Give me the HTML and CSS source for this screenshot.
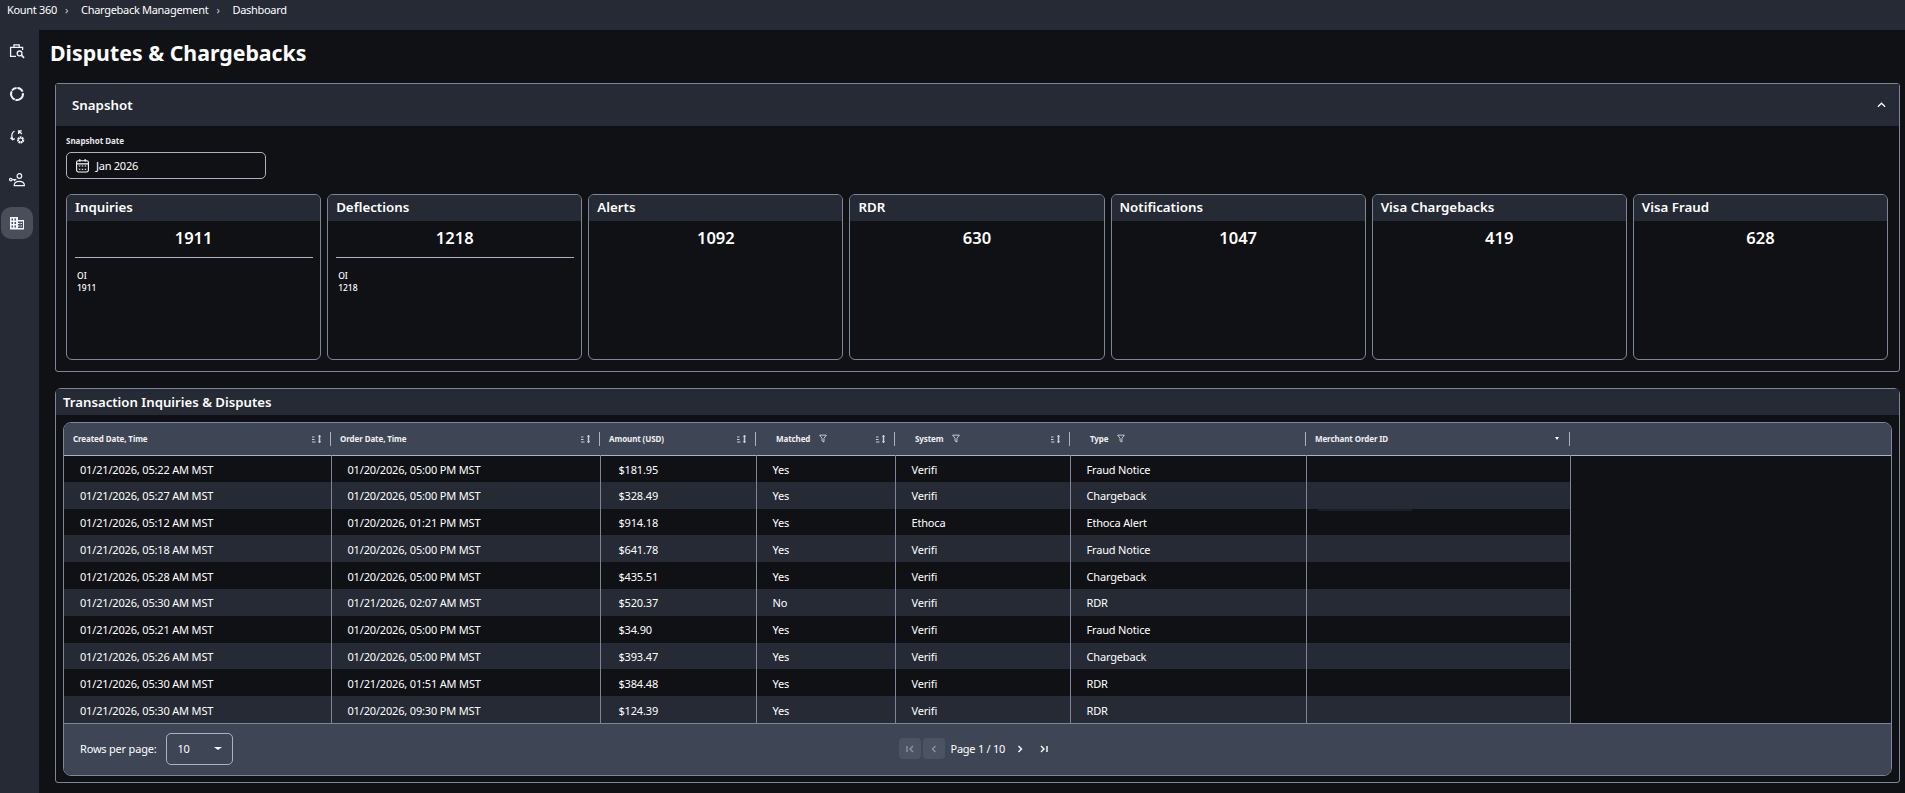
FILE: index.html
```html
<!DOCTYPE html>
<html lang="en">
  <head>
    <meta charset="UTF-8" />
    <meta name="viewport" content="width=device-width, initial-scale=1.0" />
    <title>Disputes &amp; Chargebacks</title>
    <link rel="stylesheet" href="styles.css">
  </head>
  <body>
    <svg class="defs" width="0" height="0">
      <symbol id="sort" viewBox="0 0 10 10">
        <path d="M0 3h2.500M0 5.500h2.500M0 8h3.500" stroke="currentColor" stroke-width="1" fill="none" />
        <path d="M7.500 1v8" stroke="currentColor" stroke-width="1.500" fill="none" />
        <path d="M6 3l1.500-2 1.500 2zM6 7l1.500 2 1.500-2z" fill="currentColor" />
      </symbol>
      <symbol id="funnel" viewBox="0 0 10 10">
        <path d="M.8 .8h8.400L6.200 4.800V9.400L3.800 8V4.800z" stroke="currentColor" stroke-width="1" fill="none" />
      </symbol>
    </svg>

    <nav class="topbar">
      <span>Kount 360</span><span class="crumb-sep">›</span>
      <span>Chargeback Management</span><span class="crumb-sep">›</span>
      <span>Dashboard</span>
    </nav>

    <div class="layout">
      <aside class="sidebar">
        <a class="side-item">
          <svg viewBox="0 0 16 16" width="16" height="16" fill="none" stroke="currentColor" stroke-width="1.300">
            <path d="M7 13.400H1.600V4.400h12V7M5 4.400V1.800h5.200v2.600" />
            <circle cx="10.600" cy="10.400" r="2.400" />
            <path d="M12.400 12.200l2.600 2.600" stroke-width="1.700" />
          </svg>
        </a>
        <a class="side-item">
          <svg viewBox="0 0 16 16" width="16" height="16" fill="none" stroke="currentColor" stroke-width="2">
            <path d="M7.600 2A6 6 0 0 0 3 4.500M2.700 5.200A6 6 0 0 0 5.700 13.500M6.400 13.800A6 6 0 0 0 13.900 7.200M13.600 5.700A6 6 0 0 0 8.400 2" />
          </svg>
        </a>
        <a class="side-item">
          <svg viewBox="0 0 16 16" width="16" height="16" fill="none" stroke="currentColor" stroke-width="1.300">
            <path d="M5.400 2C3 3.600 2.200 6.800 3.600 10M1.400 8.800l2.200 2 2.200-1.200" />
            <path d="M9.600 5V1.800h3.200M9.800 2l3 3" />
            <circle cx="11.600" cy="11" r="2.700" stroke-width="1.900" stroke-dasharray="1.700 .6" />
            <circle cx="11.600" cy="11" r="2" stroke-width="1" />
          </svg>
        </a>
        <a class="side-item">
          <svg viewBox="0 0 16 16" width="16" height="16" fill="none" stroke="currentColor" stroke-width="1.200">
            <circle cx="10.400" cy="4" r="2.300" />
            <path d="M5.200 13.600c0-3 2.200-4.200 5.200-4.200s5 1.200 5 4.200z" />
            <circle cx="1.800" cy="7.600" r="1.300" />
            <path d="M3.200 7.600h4.200M5.600 7.600v1.600" />
          </svg>
        </a>
        <a class="side-item active">
          <svg viewBox="0 0 16 16" width="16" height="16" fill="currentColor">
            <path fill-rule="evenodd" d="M1 2h8v3h6v9.500H1zM2.500 3.500v2H4v-2zm3 0v2H7v-2zm-3 3.500v2H4V7zm3 0v2H7V7zm-3 3.500v2H4v-2zm3 0v2H7v-2zM9 6.500V8h1.500v1H9v1.500h1.500v1H9V13h5V6.500zM11.500 8H13v1h-1.500zm0 2.500H13v1h-1.500z" />
          </svg>
        </a>
      </aside>

      <main class="content">
        <h1>Disputes &amp; Chargebacks</h1>

        <section class="panel snapshot">
          <header class="snapshot-head">
            <h2>Snapshot</h2>
            <svg viewBox="0 0 10 6" width="9" height="6" fill="none" stroke="currentColor" stroke-width="1.400">
              <path d="M1 5l4-4 4 4" />
            </svg>
          </header>
          <div class="snapshot-body">
            <label class="date-label">Snapshot Date</label>
            <div class="date-input">
              <svg viewBox="0 0 14 14" width="15" height="15" fill="none" stroke="currentColor" stroke-width="1">
                <rect x="1.500" y="2.500" width="11" height="10.500" rx="1.500" />
                <path d="M1.500 5.500h11M4.500 1v2.500M9.500 1v2.500" />
                <path d="M3.500 7.500h7M3.500 10.500h7" stroke-dasharray="1.500 1.250" />
              </svg>
              <span>Jan 2026</span>
            </div>
            <div class="cards">
              <article class="card">
                <h3>Inquiries</h3>
                <div class="card-value">1911</div>
                <hr />
                <div class="card-detail">
                  <div>OI</div>
                  <div>1911</div>
                </div>
              </article>
              <article class="card">
                <h3>Deflections</h3>
                <div class="card-value">1218</div>
                <hr />
                <div class="card-detail">
                  <div>OI</div>
                  <div>1218</div>
                </div>
              </article>
              <article class="card">
                <h3>Alerts</h3>
                <div class="card-value">1092</div>
              </article>
              <article class="card">
                <h3>RDR</h3>
                <div class="card-value">630</div>
              </article>
              <article class="card">
                <h3>Notifications</h3>
                <div class="card-value">1047</div>
              </article>
              <article class="card">
                <h3>Visa Chargebacks</h3>
                <div class="card-value">419</div>
              </article>
              <article class="card">
                <h3>Visa Fraud</h3>
                <div class="card-value">628</div>
              </article>
            </div>
          </div>
        </section>

        <section class="panel disputes">
          <header class="disputes-head">Transaction Inquiries &amp; Disputes</header>
          <div class="table-wrap">
            <table>
              <colgroup>
                <col class="col-created" />
                <col class="col-order" />
                <col class="col-amount" />
                <col class="col-matched" />
                <col class="col-system" />
                <col class="col-type" />
                <col class="col-merchant" />
                <col />
              </colgroup>
              <thead>
                <tr>
                  <th><div class="th-in"><span class="th-label">Created Date, Time</span><svg class="sort"><use href="#sort" /></svg></div></th>
                  <th><div class="th-in"><span class="th-label">Order Date, Time</span><svg class="sort"><use href="#sort" /></svg></div></th>
                  <th><div class="th-in"><span class="th-label">Amount (USD)</span><svg class="sort"><use href="#sort" /></svg></div></th>
                  <th><div class="th-in indent-m"><span class="th-label">Matched</span><svg class="funnel"><use href="#funnel" /></svg><svg class="sort"><use href="#sort" /></svg></div></th>
                  <th><div class="th-in indent-m"><span class="th-label">System</span><svg class="funnel"><use href="#funnel" /></svg><svg class="sort"><use href="#sort" /></svg></div></th>
                  <th><div class="th-in indent-m"><span class="th-label">Type</span><svg class="funnel"><use href="#funnel" /></svg></div></th>
                  <th><div class="th-in"><span class="th-label">Merchant Order ID</span><span class="mini-caret"></span></div></th>
                  <th></th>
                </tr>
              </thead>
              <tbody id="rows"></tbody>
            </table>
            <footer class="pager">
              <span class="rows-label">Rows per page:</span>
              <div class="rows-select"><span>10</span><span class="caret"></span></div>
              <div class="pages">
                <button class="page-btn" disabled>
                  <svg viewBox="0 0 10 10" width="10" height="10" fill="none" stroke="currentColor" stroke-width="1.400"><path d="M2 2v6M8 2L5 5l3 3" /></svg>
                </button>
                <button class="page-btn" disabled>
                  <svg viewBox="0 0 10 10" width="10" height="10" fill="none" stroke="currentColor" stroke-width="1.400"><path d="M6.500 2L3.500 5l3 3" /></svg>
                </button>
                <span class="page-text">Page 1 / 10</span>
                <button class="page-btn live">
                  <svg viewBox="0 0 10 10" width="10" height="10" fill="none" stroke="currentColor" stroke-width="1.400"><path d="M3.500 2l3 3-3 3" /></svg>
                </button>
                <button class="page-btn live">
                  <svg viewBox="0 0 10 10" width="10" height="10" fill="none" stroke="currentColor" stroke-width="1.400"><path d="M2 2l3 3-3 3M8 2v6" /></svg>
                </button>
              </div>
            </footer>
          </div>
        </section>
      </main>
    </div>

    <script>
      let data = [
        ["01/21/2026, 05:22 AM MST", "01/20/2026, 05:00 PM MST", "$181.95", "Yes", "Verifi", "Fraud Notice"],
        ["01/21/2026, 05:27 AM MST", "01/20/2026, 05:00 PM MST", "$328.49", "Yes", "Verifi", "Chargeback"],
        ["01/21/2026, 05:12 AM MST", "01/20/2026, 01:21 PM MST", "$914.18", "Yes", "Ethoca", "Ethoca Alert"],
        ["01/21/2026, 05:18 AM MST", "01/20/2026, 05:00 PM MST", "$641.78", "Yes", "Verifi", "Fraud Notice"],
        ["01/21/2026, 05:28 AM MST", "01/20/2026, 05:00 PM MST", "$435.51", "Yes", "Verifi", "Chargeback"],
        ["01/21/2026, 05:30 AM MST", "01/21/2026, 02:07 AM MST", "$520.37", "No", "Verifi", "RDR"],
        ["01/21/2026, 05:21 AM MST", "01/20/2026, 05:00 PM MST", "$34.90", "Yes", "Verifi", "Fraud Notice"],
        ["01/21/2026, 05:26 AM MST", "01/20/2026, 05:00 PM MST", "$393.47", "Yes", "Verifi", "Chargeback"],
        ["01/21/2026, 05:30 AM MST", "01/21/2026, 01:51 AM MST", "$384.48", "Yes", "Verifi", "RDR"],
        ["01/21/2026, 05:30 AM MST", "01/20/2026, 09:30 PM MST", "$124.39", "Yes", "Verifi", "RDR"],
      ];

      let rows = document.querySelector("#rows");

      data.forEach((row, i) => {
        let tr = document.createElement("tr");
        row.forEach((text) => {
          let td = document.createElement("td");
          td.textContent = text;
          tr.appendChild(td);
        });
        // merchant id is blanked out in this view
        let merchant = document.createElement("td");
        merchant.className = "merchant";
        if (i === 1) {
          let mask = document.createElement("span");
          mask.className = "mask";
          merchant.appendChild(mask);
        }
        tr.appendChild(merchant);
        let filler = document.createElement("td");
        filler.className = "filler";
        tr.appendChild(filler);
        rows.appendChild(tr);
      });
    </script>
  </body>
</html>
```

FILE: styles.css
```css
* {
  margin: 0;
  padding: 0;
  box-sizing: border-box;
}

html,
body {
  height: 793px;
  overflow: hidden;
}

body {
  background-color: #0f1115;
  color: #fff;
  font-family: "Noto Sans", "Open Sans", sans-serif;
}

.defs {
  position: absolute;
}

.topbar {
  height: 30px;
  background-color: #252a35;
  display: flex;
  align-items: flex-start;
  padding: 1px 0 0 7px;
  font-size: 11px;
  letter-spacing: -0.3px;
  line-height: 18px;
}

.crumb-sep {
  width: 24px;
  padding-left: 8px;
  color: #c9ced8;
}

.layout {
  display: flex;
  height: 763px;
}

.sidebar {
  width: 39px;
  background-color: #252a35;
  padding: 5px 0 0 1px;
  display: flex;
  flex-direction: column;
  gap: 11px;
}

.side-item {
  width: 32px;
  height: 32px;
  border-radius: 10px;
  display: flex;
  justify-content: center;
  align-items: center;
  color: #f2f4f7;
}

.side-item.active {
  background-color: #4a4e59;
}

.content {
  flex: 1;
  min-width: 0;
  padding: 8px 5px 0 16px;
}

h1 {
  font-size: 21.3px;
  line-height: 30px;
  font-weight: 700;
  margin: 0 0 15px -5px;
}

.panel {
  border: 1px solid #7d8699;
}

.snapshot {
  height: 289px;
  border-radius: 3px;
  margin-bottom: 16px;
}

.snapshot-head {
  height: 42px;
  background-color: #252a35;
  display: flex;
  justify-content: space-between;
  align-items: center;
  padding: 0 13px 0 16px;
}

.snapshot-head h2 {
  font-size: 13.3px;
  font-weight: 600;
}

.snapshot-body {
  padding: 9px 11px 0 10px;
}

.date-label {
  display: block;
  font-size: 8px;
  font-weight: 700;
  line-height: 12px;
  color: #e4e7ec;
  margin-bottom: 5px;
}

.date-input {
  width: 200px;
  height: 27px;
  border: 1px solid #aab2c4;
  border-radius: 5px;
  display: flex;
  align-items: center;
  gap: 6px;
  padding-left: 8px;
  font-size: 11px;
  letter-spacing: -0.25px;
  margin-bottom: 15px;
}

.cards {
  display: grid;
  grid-template-columns: repeat(7, 1fr);
  gap: 6px;
}

.card {
  height: 166px;
  border: 1px solid #7d8699;
  border-radius: 6px;
  overflow: hidden;
}

.card h3 {
  height: 26px;
  background-color: #252a35;
  font-size: 13.3px;
  font-weight: 600;
  line-height: 25px;
  padding-left: 8px;
}

.card-value {
  text-align: center;
  font-size: 16.5px;
  font-weight: 600;
  line-height: 25px;
  margin-top: 4px;
}

.card hr {
  border: none;
  border-top: 1px solid #aab2c4;
  margin: 7px 7px 0 8px;
}

.card-detail {
  padding: 12px 0 0 10px;
  font-size: 8.5px;
  font-weight: 500;
  line-height: 12px;
}

.disputes {
  height: 395px;
  border-radius: 6px 6px 3px 3px;
}

.disputes-head {
  height: 26px;
  background-color: #252a35;
  font-size: 13.2px;
  font-weight: 600;
  line-height: 26px;
  padding-left: 7px;
}

.table-wrap {
  margin: 7px 7px 0 7px;
  height: 354px;
  border: 1px solid #7d8699;
  border-radius: 8px;
  overflow: hidden;
  background-color: #0f1115;
}

table {
  width: 100%;
  table-layout: fixed;
  border-collapse: collapse;
}

.col-created {
  width: 267px;
}

.col-order {
  width: 269px;
}

.col-amount {
  width: 156px;
}

.col-matched {
  width: 139px;
}

.col-system {
  width: 175px;
}

.col-type {
  width: 236px;
}

.col-merchant {
  width: 264px;
}

thead tr {
  background-color: #3e4555;
  border-bottom: 1px solid #aab2c4;
}

th {
  height: 32px;
  text-align: left;
  font-size: 8px;
  font-weight: 700;
  letter-spacing: -0.1px;
  padding: 0;
  color: #eef0f4;
}

.th-in {
  height: 14px;
  display: flex;
  align-items: center;
  padding: 0 8px 0 9px;
  border-right: 1px solid #aab2c4;
}

.indent-m {
  padding-left: 20px;
}

.funnel {
  width: 8px;
  height: 9px;
  margin-left: 9px;
  color: #e4e7ec;
}

.sort {
  width: 10px;
  height: 10px;
  margin-left: auto;
  color: #c9ced8;
}

.mini-caret {
  margin-left: auto;
  border-left: 2.5px solid transparent;
  border-right: 2.5px solid transparent;
  border-top: 3px solid #fff;
  margin-right: 2px;
}

td {
  height: 26.8px;
  font-size: 11px;
  letter-spacing: -0.17px;
  padding: 1px 0 0 16px;
  border-right: 1px solid #7d8699;
  white-space: nowrap;
}

td:nth-child(3) {
  padding-left: 18px;
}

td.filler {
  border: none;
  background-color: #0f1115;
}

tbody tr:nth-child(even) {
  background-color: #252a35;
}

td.merchant {
  position: relative;
}

.mask {
  position: absolute;
  left: 11px;
  width: 94px;
  bottom: -2px;
  height: 2px;
  background-color: #1c1f27;
}

.pager {
  height: 53px;
  background-color: #3e4555;
  border-top: 1px solid #7d8699;
  display: flex;
  align-items: center;
  padding: 0 0 2px 16px;
  font-size: 11px;
  letter-spacing: -0.2px;
}

.rows-select {
  width: 67px;
  height: 32px;
  margin-left: 10px;
  border: 1px solid #aab2c4;
  border-radius: 5px;
  display: flex;
  align-items: center;
  justify-content: space-between;
  padding: 0 10px;
}

.caret {
  border-left: 4px solid transparent;
  border-right: 4px solid transparent;
  border-top: 3.5px solid #fff;
}

.pages {
  margin-left: 666px;
  display: flex;
  align-items: center;
  gap: 2px;
}

.page-btn {
  width: 22px;
  height: 21px;
  border: none;
  border-radius: 4px;
  background-color: #4c5362;
  color: #8b92a1;
  display: flex;
  align-items: center;
  justify-content: center;
}

.page-btn.live {
  background: none;
  color: #fff;
}

.page-text {
  margin: 0 2px 0 3px;
  letter-spacing: -0.25px;
}
```
